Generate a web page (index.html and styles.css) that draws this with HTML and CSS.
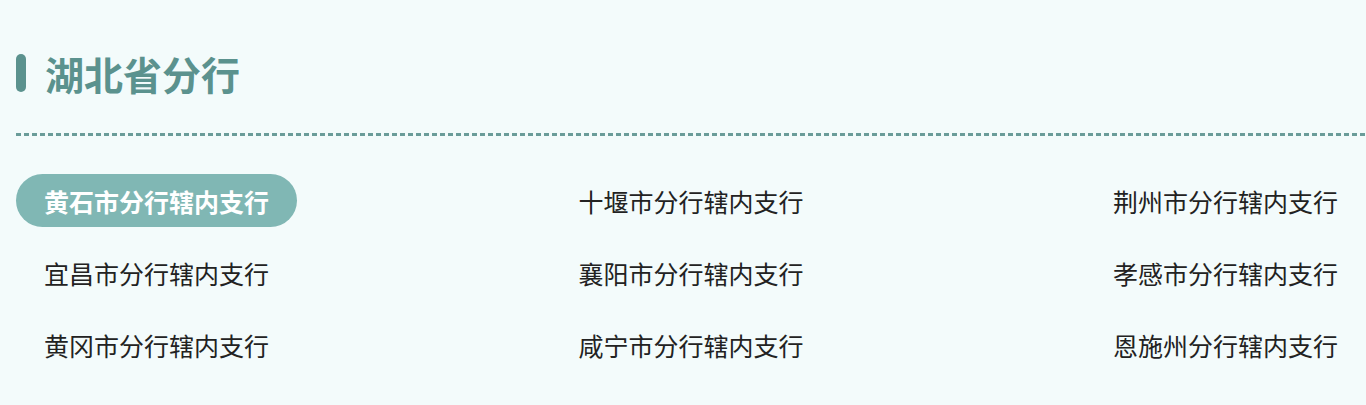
FILE: index.html
```html
<!DOCTYPE html>
<html>
  <head>
    <meta charset="UTF-8">
    <title>湖北省分行</title>
    <link rel="stylesheet" href="styles.css">
  </head>
  <body>
    <div class="branch">
      <div class="title">
        <span class="mark"></span>
        <h2>湖北省分行</h2>
      </div>
      <div class="divider"></div>
      <ul class="list">
        <li class="item active">黄石市分行辖内支行</li>
        <li class="item">十堰市分行辖内支行</li>
        <li class="item">荆州市分行辖内支行</li>
        <li class="item">宜昌市分行辖内支行</li>
        <li class="item">襄阳市分行辖内支行</li>
        <li class="item">孝感市分行辖内支行</li>
        <li class="item">黄冈市分行辖内支行</li>
        <li class="item">咸宁市分行辖内支行</li>
        <li class="item">恩施州分行辖内支行</li>
      </ul>
    </div>
  </body>
</html>
```

FILE: styles.css
```css
body { background: #f3fbfb; color: #222; font-family: "Noto Sans CJK SC", "Noto Sans", sans-serif; margin: 0; overflow: hidden }
h2 { margin: 0 }
ul { list-style: none; margin: 0; padding: 0 }

.branch { padding: 54px 0 0 16px }
.title { align-items: center; display: flex; height: 38px }
.title .mark { background: #5b928e; border-radius: 5px; height: 38px; margin-right: 19px; width: 10px }
.title h2 { color: #5b928e; font-size: 39px; font-weight: 700; line-height: 38px }
.divider { background: repeating-linear-gradient(90deg, #6a9c99 0 5px, transparent 5px 8px); height: 3px; margin-top: 41px }
.list { display: grid; grid-template-columns: repeat(3, 281px); justify-content: space-between; margin-top: 38px; row-gap: 19px }
.item { align-items: center; border-radius: 27px; display: flex; font-size: 25px; height: 53px; justify-content: center; white-space: nowrap }
.item.active { background: #80b7b4; color: #fff; font-weight: 700 }
```
